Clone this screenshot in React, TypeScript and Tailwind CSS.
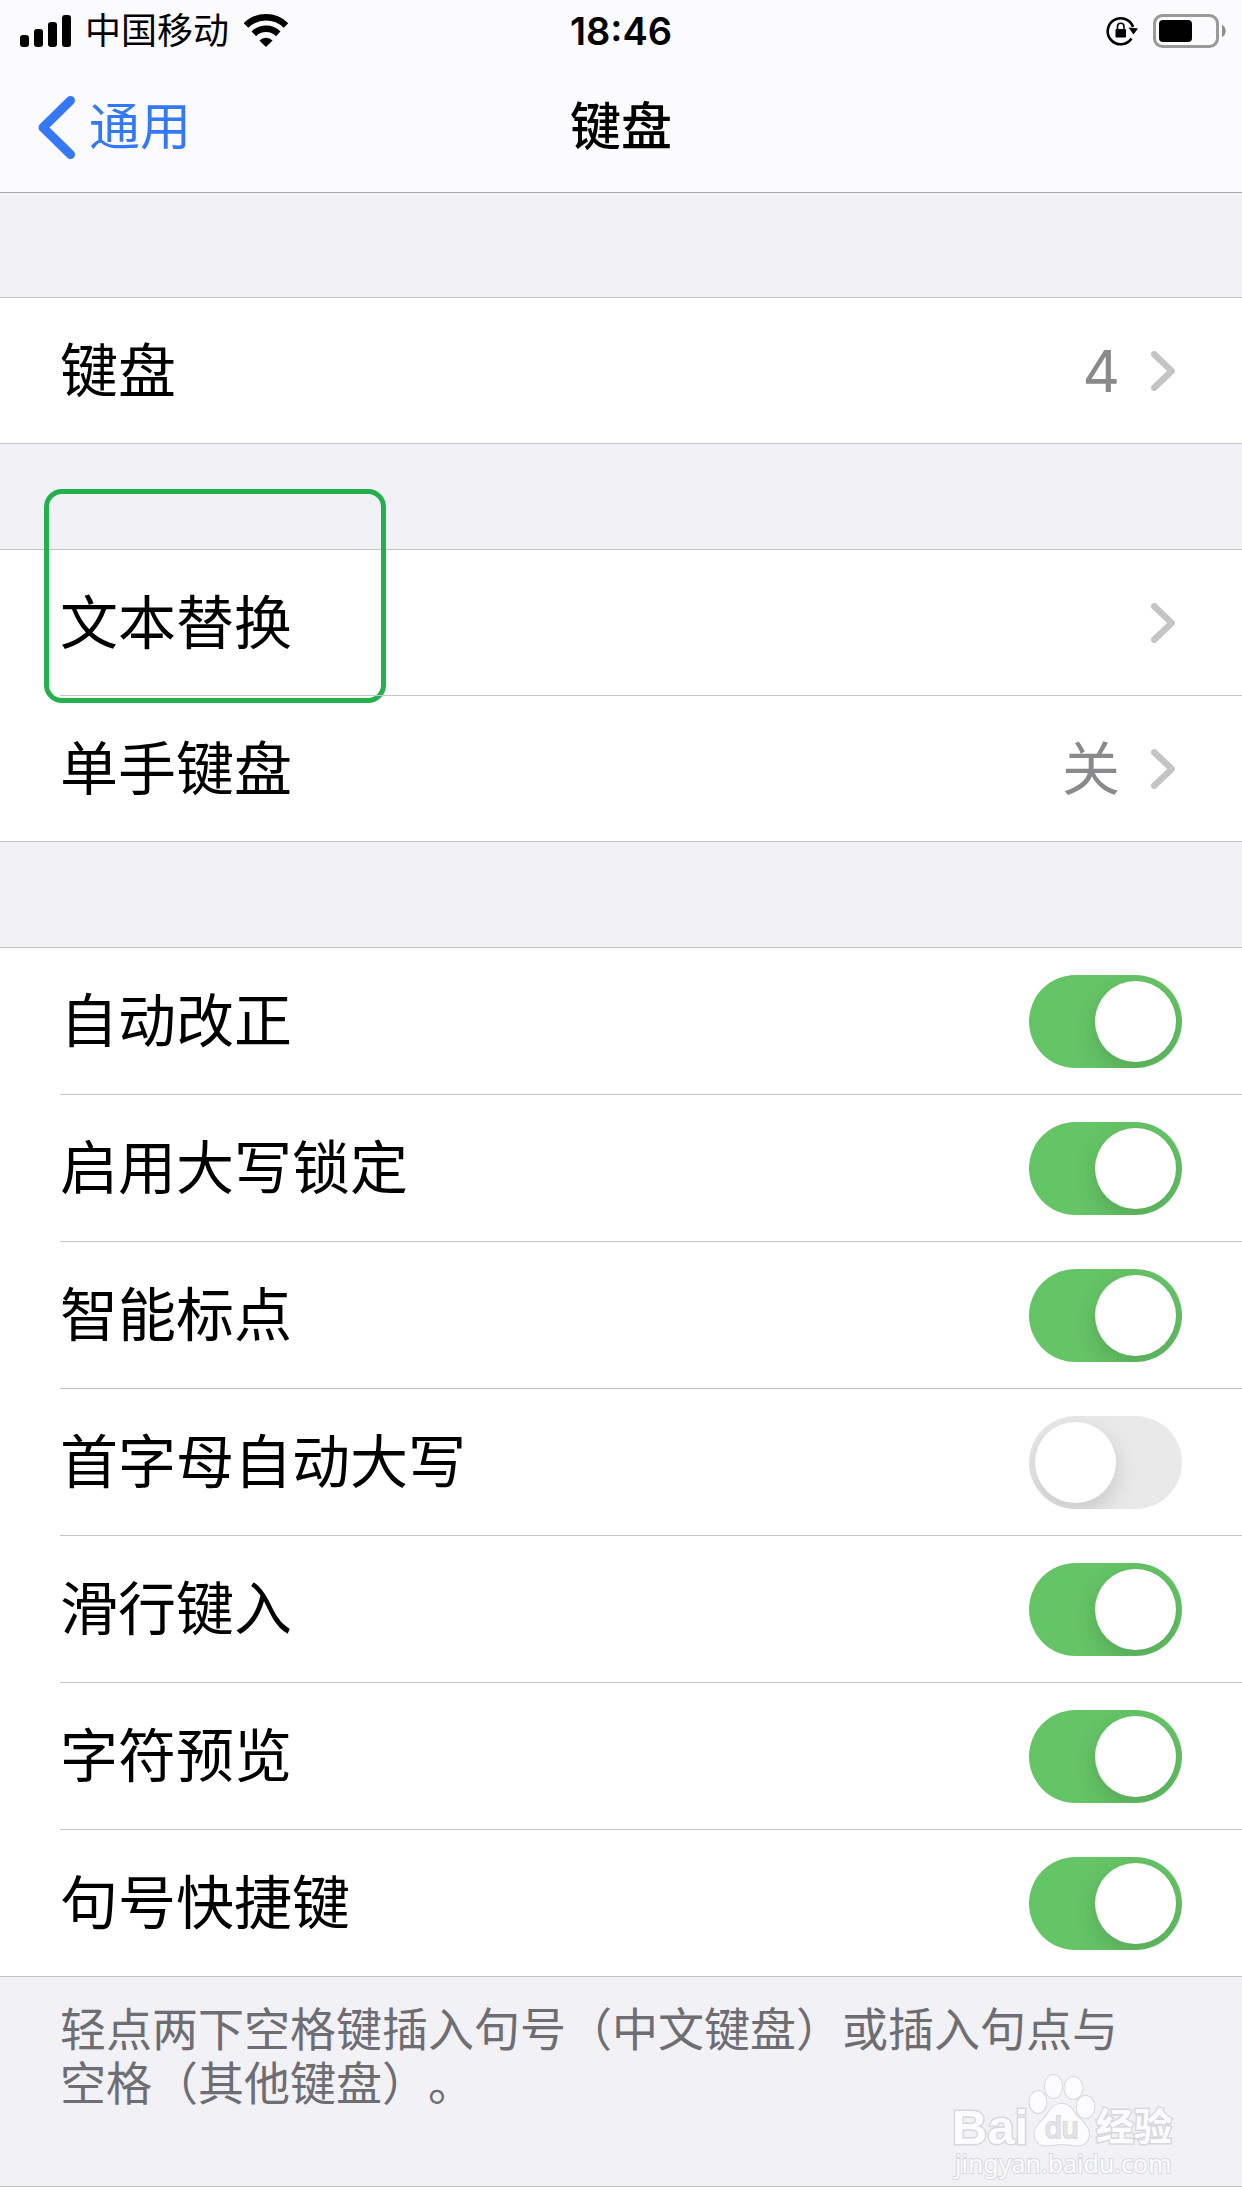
import { useState } from 'react';
import type { ReactNode } from 'react';

/** Cellular strength, four rising bars */
const SignalIcon = () => (
  <svg width="51" height="32" viewBox="0 0 51 32" aria-hidden="true">
    <rect x="0" y="20" width="9" height="12" rx="3" />
    <rect x="14" y="14" width="9" height="18" rx="3" />
    <rect x="28" y="7" width="9" height="25" rx="3" />
    <rect x="42" y="0" width="9" height="32" rx="3" />
  </svg>
);

const WifiIcon = () => (
  <svg width="46" height="34" viewBox="0 0 46 34" aria-hidden="true">
    <path d="M3 11.5A28.5 28.5 0 0 1 43 11.5" fill="none" stroke="#000" strokeWidth="6.5" />
    <path d="M10.8 19.8A17.5 17.5 0 0 1 35.2 19.8" fill="none" stroke="#000" strokeWidth="6.5" />
    <path d="M23 33L16.4 26.4A9.5 9.5 0 0 1 29.6 26.4Z" />
  </svg>
);

const RotationLockIcon = () => (
  <svg width="32" height="30" viewBox="0 0 32 30" aria-hidden="true">
    <path d="M25.5 22.5A13 13 0 1 1 27 11" fill="none" stroke="#000" strokeWidth="2.6" />
    <path d="M22.5 11.5L32 12.5L27.5 18.5Z" />
    <rect x="9.5" y="13" width="10.5" height="8.5" rx="1" />
    <path d="M11.5 14V10.5A3.2 3.2 0 0 1 18 10.5V14" fill="none" stroke="#000" strokeWidth="1.6" />
  </svg>
);

const BatteryIcon = () => (
  <svg width="73" height="34" viewBox="0 0 73 34" aria-hidden="true">
    <rect x="1.5" y="1.5" width="63" height="31" rx="8" fill="none" stroke="#999" strokeWidth="3" />
    <rect x="6" y="6" width="33" height="22" rx="4" />
    <path d="M69 11C74 13 74 21 69 23Z" fill="#8e8e8e" />
  </svg>
);

const BackIcon = () => (
  <svg width="37" height="63" viewBox="0 0 37 63" fill="none" aria-hidden="true">
    <path d="M32.5 4.5L5 31.5L32.5 58.5" stroke="#3478f6" strokeWidth="9" strokeLinecap="round" strokeLinejoin="round" />
  </svg>
);

const ChevronIcon = () => (
  <svg width="24" height="40" viewBox="0 0 24 40" fill="none" aria-hidden="true">
    <path d="M3.3 3.3L20.7 20L3.3 36.7" stroke="#c4c4c6" strokeWidth="6.5" strokeLinecap="round" strokeLinejoin="round" />
  </svg>
);

const BaiduLogo = ({ className }: { className?: string }) => (
  <svg
    width="240"
    height="116"
    viewBox="0 0 240 116"
    className={className}
    fill="#fcfcfe"
    stroke="#d8d8dc"
    strokeWidth="2"
    paintOrder="stroke"
    role="img"
    aria-label="Baidu 经验"
  >
    <ellipse cx="93" cy="34" rx="8.5" ry="11" />
    <ellipse cx="108.5" cy="18.5" rx="8.5" ry="11.5" />
    <ellipse cx="128.5" cy="20" rx="9" ry="11" />
    <ellipse cx="140.500" cy="39" rx="9" ry="11" />
    <path d="M116.5 36C122 36 126 38.500 129 44C132 50 144 56 144 66C144 74 138 78 131 77.500C125 77 122 76 116.500 76C111 76 108 77.500 102 77.500C94 77.500 89.500 73 89.500 66C89.500 57 101 50 104 44C107 38.500 111 36 116.500 36Z" />
    <text x="7" y="76" fontSize="49" strokeWidth="3" className="font-['Liberation_Sans',sans-serif] font-bold">Bai</text>
    <text x="151" y="72" fontSize="38" strokeWidth="3" className="font-['Noto_Sans_CJK_SC',sans-serif] font-bold">经验</text>
    <text x="10" y="105" fontSize="25" className="font-['Noto_Sans',sans-serif]">jingyan.baidu.com</text>
    <text x="100" y="70" fontSize="30" fill="#e4e4e8" className="font-['Liberation_Sans',sans-serif]">du</text>
  </svg>
);

const Group = ({ children }: { children: ReactNode }) => (
  <ul className="border-y border-[#c4c4c6] bg-white">{children}</ul>
);

interface LinkRowProps {
  label: string;
  value?: string;
  highlighted?: boolean;
}

function LinkRow({ label, value, highlighted = false }: LinkRowProps) {
  return (
    <li className="group relative pl-[60px]">
      <button
        type="button"
        className="box-content flex h-[145px] w-full items-center border-t border-[#c4c4c6] text-left group-first:border-t-0"
      >
        <span className="flex-1">{label}</span>
        {value && <span className="mr-[31px] text-[#8a8a8d]">{value}</span>}
        <span className="mr-[67px]">
          <ChevronIcon />
        </span>
      </button>
      {highlighted && (
        <span className="pointer-events-none absolute -top-[61px] left-[44px] h-[214px] w-[342px] rounded-[18px] border-5 border-[#24b14d]" />
      )}
    </li>
  );
}

interface SwitchRowProps {
  label: string;
  checked: boolean;
  onChange: (checked: boolean) => void;
}

function SwitchRow({ label, checked, onChange }: SwitchRowProps) {
  return (
    <li className="group pl-[60px]">
      <label className="box-content flex h-[146px] items-center justify-between border-t border-[#c4c4c6] group-first:border-t-0">
        <span>{label}</span>
        <input
          type="checkbox"
          role="switch"
          checked={checked}
          onChange={(e) => onChange(e.target.checked)}
          className="mr-[60px] flex h-[93px] w-[153px] appearance-none items-center overflow-hidden rounded-full bg-[#e9e9e9] px-[6px] before:size-[81px] before:rounded-full before:bg-white before:shadow-[0_9px_24px_rgba(0,0,0,0.15)] checked:justify-end checked:bg-[#65c466]"
        />
      </label>
    </li>
  );
}

const SWITCHES = [
  { label: '自动改正', on: true },
  { label: '启用大写锁定', on: true },
  { label: '智能标点', on: true },
  { label: '首字母自动大写', on: false },
  { label: '滑行键入', on: true },
  { label: '字符预览', on: true },
  { label: '句号快捷键', on: true },
];

export default function App() {
  const [switches, setSwitches] = useState(SWITCHES);

  const toggle = (index: number, on: boolean) =>
    setSwitches((prev) => prev.map((s, i) => (i === index ? { ...s, on } : s)));

  return (
    <div
      lang="zh-CN"
      className="flex min-h-screen flex-col bg-[#f2f1f6] font-['Inter','Noto_Sans_CJK_SC',sans-serif] text-black"
    >
      <header className="border-b border-[#a9a9ad] bg-[#fbfbfd]">
        {/* Status bar */}
        <div className="grid h-[62px] grid-cols-3 items-center px-4 text-[36px] leading-[60px]">
          <div className="flex items-center gap-[14px] pl-1">
            <SignalIcon />
            <span>中国移动</span>
            <WifiIcon />
          </div>
          <span className="text-center text-[38px] font-semibold">18:46</span>
          <div className="flex items-center justify-end gap-[15px]">
            <RotationLockIcon />
            <BatteryIcon />
          </div>
        </div>

        {/* Navigation bar */}
        <nav className="grid h-[130px] grid-cols-3 items-center text-[51px]">
          <a href="#general" className="flex items-center gap-[14px] pl-[38px] text-[#3478f6]">
            <BackIcon />
            通用
          </a>
          <h1 className="text-center font-medium">键盘</h1>
        </nav>
      </header>

      <main className="flex flex-1 flex-col gap-[105px] pt-[104px] text-[58px] leading-[80px]">
        <Group>
          <LinkRow label="键盘" value="4" />
        </Group>

        <Group>
          <LinkRow label="文本替换" highlighted />
          <LinkRow label="单手键盘" value="关" />
        </Group>

        <div className="flex flex-1 flex-col">
          <Group>
            {switches.map((s, i) => (
              <SwitchRow key={s.label} label={s.label} checked={s.on} onChange={(on) => toggle(i, on)} />
            ))}
          </Group>
          <div className="relative min-h-[209px] pt-[25px] pr-[90px] pl-[60px]">
            <p className="text-[46px] leading-[54px] text-[#6d6d72] [text-spacing-trim:space-all]">
              轻点两下空格键插入句号（中文键盘）或插入句点与空格（其他键盘）。
            </p>
            <BaiduLogo className="absolute right-[57px] bottom-[2px]" />
          </div>
          <div className="flex-1 border-t border-[#c4c4c6] bg-white" />
        </div>
      </main>
    </div>
  );
}
